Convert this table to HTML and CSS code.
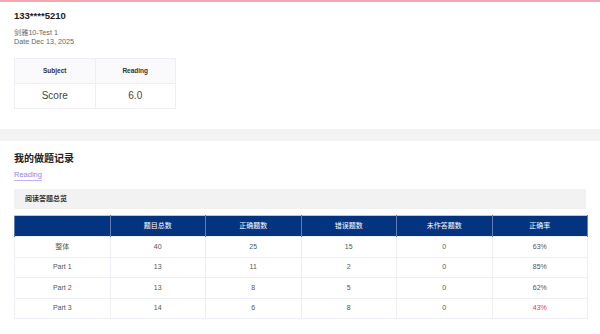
FILE: index.html
```html
<!DOCTYPE html>
<html>
<head>
<meta charset="utf-8">
<link rel="stylesheet" href="styles.css">
</head>
<body>
<div class="page">
  <section class="summary">
    <div class="phone">133****5210</div>
    <div class="meta first">剑雅10-Test 1</div>
    <div class="meta">Date Dec 13, 2025</div>
    <table class="score">
      <tr><th>Subject</th><th>Reading</th></tr>
      <tr><td>Score</td><td>6.0</td></tr>
    </table>
  </section>
  <div class="band"></div>
  <section class="records">
    <h2 class="title">我的做题记录</h2>
    <div class="tabs"><span class="tab">Reading</span></div>
    <div class="bar">阅读答题总览</div>
    <table class="stats">
      <tr><th></th><th>题目总数</th><th>正确题数</th><th>错误题数</th><th>未作答题数</th><th>正确率</th></tr>
      <tr><td>整体</td><td>40</td><td>25</td><td>15</td><td>0</td><td>63%</td></tr>
      <tr><td>Part 1</td><td>13</td><td>11</td><td>2</td><td>0</td><td>85%</td></tr>
      <tr><td>Part 2</td><td>13</td><td>8</td><td>5</td><td>0</td><td>62%</td></tr>
      <tr><td>Part 3</td><td>14</td><td>6</td><td>8</td><td>0</td><td class="low">43%</td></tr>
    </table>
  </section>
</div>
</body>
</html>
```
FILE: styles.css
```css
* { box-sizing: border-box; }
html, body { margin: 0; padding: 0; background: #fff; }
body {
  font-family: "Liberation Sans", Arial, "Noto Sans CJK SC", sans-serif;
  color: #333;
  line-height: 1.2;
}
.page { border-top: 2px solid #f2a7b0; }
.summary { padding: 7px 14px 20px; }
.phone { font-size: 9.5px; font-weight: bold; color: #222; line-height: 14px; }
.meta { font-size: 7.2px; color: #666; line-height: 9px; }
.meta.first { margin-top: 4.5px; }
.score {
  margin-top: 12.5px;
  border-collapse: collapse;
  width: 162px;
}
.score th, .score td {
  border: 1px solid #eeeef4;
  width: 50%;
  text-align: center;
  padding: 0;
}
.score th { height: 25px; font-size: 6.5px; font-weight: bold; background: #fafafc; color: #333; }
.score td { height: 25px; font-size: 10px; color: #444; }
.band { height: 12px; background: #f3f3f3; }
.records { padding: 10px 12px 0 14px; }
.title {
  margin: 0;
  font-size: 10px;
  line-height: 14px;
  font-weight: bold;
  color: #222;
  font-family: "Noto Sans CJK SC", sans-serif;
}
.tabs { margin-top: 5px; display: flex; }
.tab {
  font-size: 7.5px;
  color: #8b86e6;
  line-height: 10px;
  border-bottom: 1px solid #b9b5f2;
}
.bar {
  margin-top: 8px;
  height: 20px;
  line-height: 20px;
  background: #f2f2f2;
  padding-left: 11px;
  margin-right: 2px;
  font-size: 7px;
  font-weight: bold;
  color: #333;
}
.stats {
  margin-top: 6px;
  width: 574px;
  border-collapse: collapse;
  table-layout: fixed;
}
.stats th, .stats td {
  text-align: center;
  font-size: 7px;
  padding: 0;
  line-height: 10px;
}
.stats th {
  background: #04347f;
  color: #fff;
  font-weight: normal;
  height: 21px;
  border-left: 1px solid #5f7fb3;
  border-right: 1px solid #5f7fb3;
  border-top: 1px solid #bcc8dc;
}
.stats td {
  height: 20.5px;
  color: #555;
  border: 1px solid #eeeef6;
}
.stats td.low { color: #e8394a; }
```
